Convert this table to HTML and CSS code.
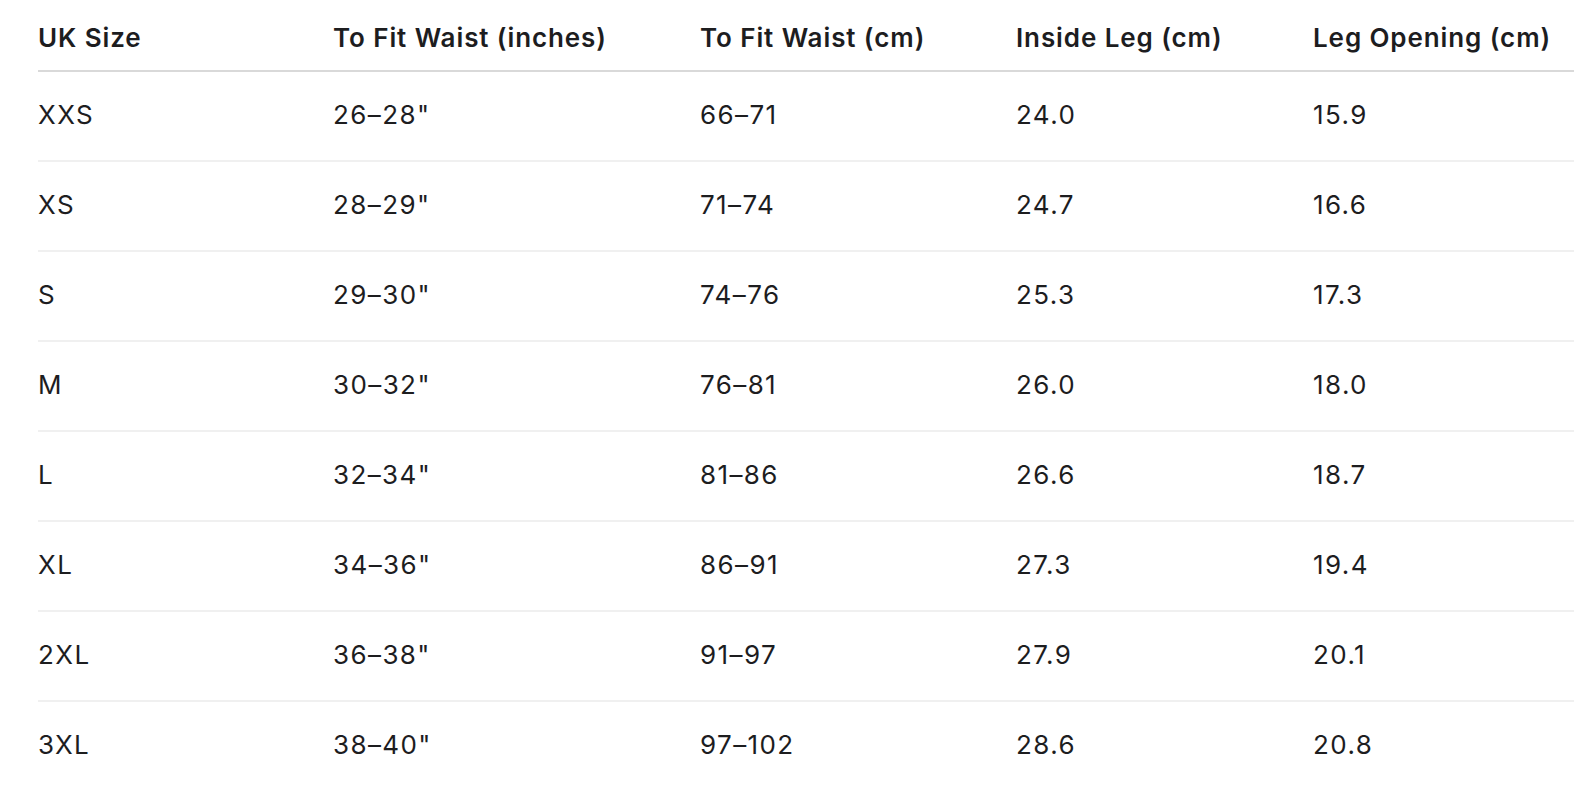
FILE: index.html
```html
<!DOCTYPE html>
<html lang="en">
<head>
<meta charset="utf-8">
<title>Size Guide</title>
<link rel="stylesheet" href="styles.css">
</head>
<body>
<div class="wrap">
<table class="size-table">
  <colgroup>
    <col class="c1"><col class="c2"><col class="c3"><col class="c4"><col class="c5">
  </colgroup>
  <thead>
    <tr><th>UK Size</th><th>To Fit Waist (inches)</th><th>To Fit Waist (cm)</th><th>Inside Leg (cm)</th><th>Leg Opening (cm)</th></tr>
  </thead>
  <tbody>
    <tr><td>XXS</td><td>26–28"</td><td>66–71</td><td>24.0</td><td>15.9</td></tr>
    <tr><td>XS</td><td>28–29"</td><td>71–74</td><td>24.7</td><td>16.6</td></tr>
    <tr><td>S</td><td>29–30"</td><td>74–76</td><td>25.3</td><td>17.3</td></tr>
    <tr><td>M</td><td>30–32"</td><td>76–81</td><td>26.0</td><td>18.0</td></tr>
    <tr><td>L</td><td>32–34"</td><td>81–86</td><td>26.6</td><td>18.7</td></tr>
    <tr><td>XL</td><td>34–36"</td><td>86–91</td><td>27.3</td><td>19.4</td></tr>
    <tr><td>2XL</td><td>36–38"</td><td>91–97</td><td>27.9</td><td>20.1</td></tr>
    <tr><td>3XL</td><td>38–40"</td><td>97–102</td><td>28.6</td><td>20.8</td></tr>
  </tbody>
</table>
</div>
</body>
</html>
```
FILE: styles.css
```css
html, body {
  margin: 0;
  padding: 0;
  background: #ffffff;
}
body {
  font-family: Inter, "Noto Sans", "Liberation Sans", sans-serif;
  color: #1d1d1f;
}
.wrap {
  padding: 20px 22px 0 38px;
}
.size-table {
  width: 1536px;
  border-collapse: collapse;
  table-layout: fixed;
}
.c1 { width: 295px; }
.c2 { width: 367px; }
.c3 { width: 316px; }
.c4 { width: 297px; }
.c5 { width: 261px; }
.size-table th {
  text-align: left;
  font-size: 26px;
  font-weight: 600;
  line-height: 36px;
  letter-spacing: 0.9px;
  padding: 0 0 14px 0;
  border-bottom: 2px solid #d9d9d9;
  white-space: nowrap;
}
.size-table td {
  font-size: 26px;
  font-weight: 400;
  line-height: 36px;
  letter-spacing: 1.4px;
  padding: 25px 0 27px;
  border-bottom: 2px solid #f0f0f0;
  white-space: nowrap;
}
.size-table tbody tr:last-child td {
  border-bottom: none;
}
```
